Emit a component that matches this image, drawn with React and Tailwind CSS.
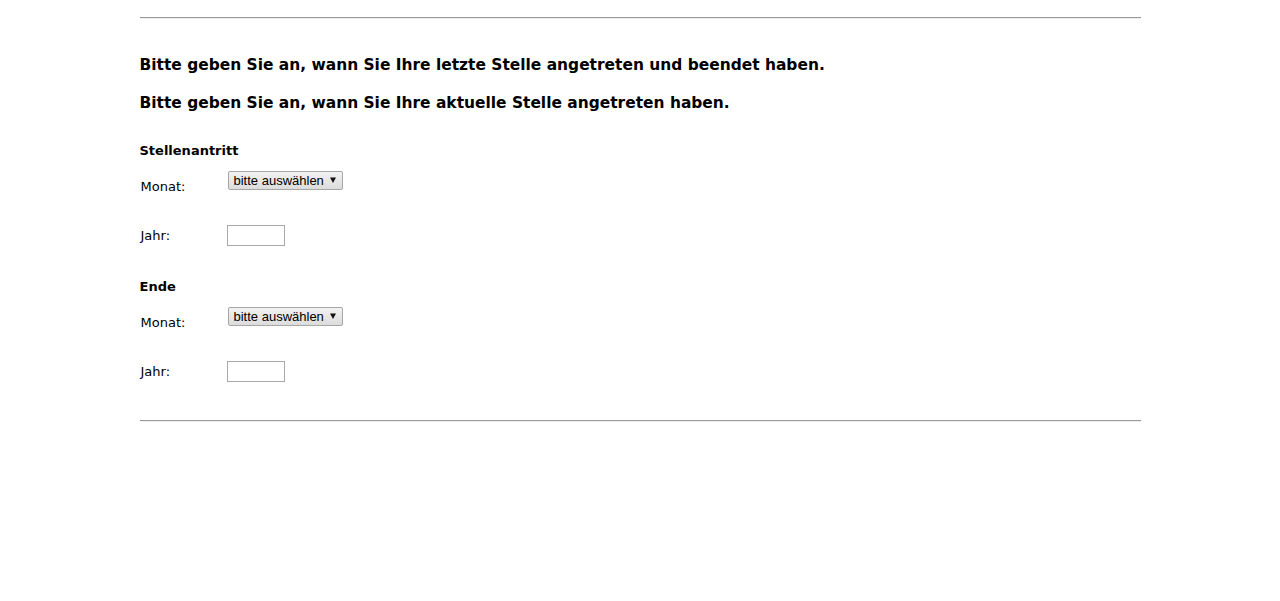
import React from "react";

function FakeSelect() {
  return (
    <div className="ml-[1px] flex h-[19px] w-[115px] items-center justify-between rounded-[2px] border border-[#a6a6a6] bg-gradient-to-b from-[#f2f2f2] to-[#dcdcdc] pl-[5px] pr-[6px] text-[13px] leading-none text-black" style={{ fontFamily: '"Liberation Sans", Arial, sans-serif' }}>
      <span>bitte auswählen</span>
      <svg width="6" height="6" viewBox="0 0 6 6" className="mt-[-2px]">
        <path d="M0 0.5 L6 0.5 L3 6 Z" fill="#111" />
      </svg>
    </div>
  );
}

function Section({ title, titleMt }) {
  return (
    <div>
      <div className={`${titleMt} text-[13px] font-bold leading-[16px]`}>{title}</div>
      <div className="mt-[12px]">
        <div className="flex h-[54px] items-start">
          <div className="w-[87px] pl-[1px] pt-[8px] text-[13px] leading-[16px]">Monat:</div>
          <FakeSelect />
        </div>
        <div className="flex h-[21px] items-start">
          <div className="w-[87px] pl-[1px] pt-[3px] text-[13px] leading-[16px]">Jahr:</div>
          <div className="h-[21px] w-[58px] border border-[#a9a9a9] bg-white" />
        </div>
      </div>
    </div>
  );
}

export default function App() {
  return (
    <div className="min-h-[601px] w-full bg-white text-black" style={{ fontFamily: '"DejaVu Sans", Verdana, sans-serif' }}>
      <div className="mx-auto w-[1001px] pt-[17px]">
        <div className="h-0 border-t border-b border-t-[#9a9a9a] border-b-[#eeeeee]" />
        <div className="mt-[36px] text-[15.45px] font-bold leading-[20px]">
          Bitte geben Sie an, wann Sie Ihre letzte Stelle angetreten und beendet haben.
        </div>
        <div className="mt-[18px] text-[15.45px] font-bold leading-[20px]">
          Bitte geben Sie an, wann Sie Ihre aktuelle Stelle angetreten haben.
        </div>
        <Section title="Stellenantritt" titleMt="mt-[30px]" />
        <Section title="Ende" titleMt="mt-[33px]" />
        <div className="mt-[38px] h-0 border-t border-b border-t-[#9a9a9a] border-b-[#eeeeee]" />
      </div>
    </div>
  );
}
